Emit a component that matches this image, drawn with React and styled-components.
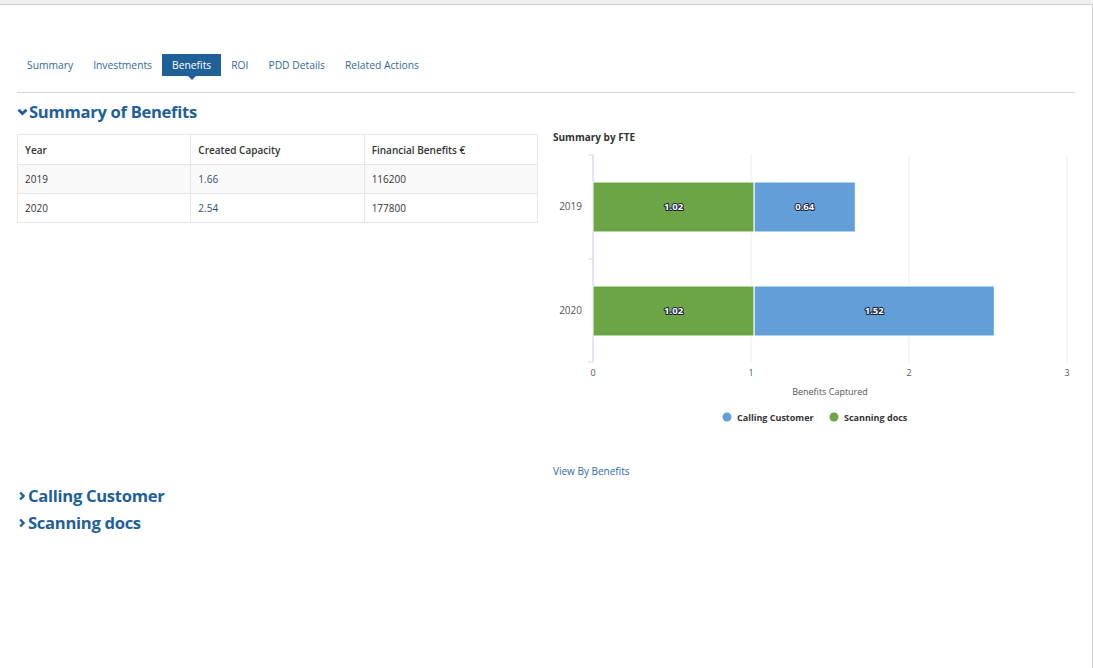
import React from 'react'
import styled, { createGlobalStyle } from 'styled-components'

const GlobalStyle = createGlobalStyle`
  html, body {
    margin: 0;
    padding: 0;
    background: #fff;
    font-family: "Open Sans", "Liberation Sans", sans-serif;
    color: #333;
  }
`

const TopStrip = styled.div`
  height: 4px;
  background: #efefef;
  border-bottom: 1px solid #cfcfcf;
`

const Panel = styled.div`
  width: 1093px;
  height: 663px;
  box-sizing: border-box;
  border-right: 1px solid #cfcfcf;
  padding: 49px 17px 0 17px;
`

const Tabs = styled.ul`
  display: flex;
  list-style: none;
  margin: 0;
  padding: 0 0 16px 0;
  border-bottom: 1px solid #d4d4d4;
`

const Tab = styled.li`
  position: relative;
  height: 22px;
  line-height: 23px;
  padding: 0 10px;
  font-size: 10.3px;
  color: ${p => (p.active ? '#fff' : '#2f6aa0')};
  background: ${p => (p.active ? '#1f6099' : 'transparent')};
  cursor: pointer;
  &::after {
    content: '';
    display: ${p => (p.active ? 'block' : 'none')};
    position: absolute;
    left: 50%;
    bottom: -4px;
    margin-left: -4px;
    border-left: 4px solid transparent;
    border-right: 4px solid transparent;
    border-top: 4px solid #1f6099;
  }
`

const SectionTitle = styled.h2`
  display: flex;
  align-items: center;
  margin: 0;
  height: 27px;
  font-size: 16.6px;
  font-weight: 700;
  color: #1f5f99;
  letter-spacing: -0.3px;
  svg {
    flex: none;
    margin-right: ${p => (p.open ? '1px' : '3px')};
    margin-left: ${p => (p.open ? '0' : '2px')};
  }
`

const Chevron = ({ open }) =>
  open ? (
    <svg width="11" height="8" viewBox="0 0 11 8">
      <path d="M1.5 1.8 L5.5 5.6 L9.5 1.8" fill="none" stroke="#1f5f99" strokeWidth="2.8" />
    </svg>
  ) : (
    <svg width="6" height="10" viewBox="0 0 6 10">
      <path d="M1.2 1.5 L4.5 5 L1.2 8.5" fill="none" stroke="#1f5f99" strokeWidth="2.4" />
    </svg>
  )

const Columns = styled.div`
  display: grid;
  grid-template-columns: 521px 1fr;
  column-gap: 15px;
  margin-top: 9px;
`

const Table = styled.table`
  width: 521px;
  border-collapse: collapse;
  table-layout: fixed;
  font-size: 10px;
  align-self: start;
`

const Th = styled.th`
  text-align: left;
  font-weight: 600;
  color: #333;
  height: 29px;
  padding: 0 7px;
  border: 1px solid #e6e6e6;
`

const Row = styled.tr`
  background: ${p => (p.striped ? '#f9f9f9' : '#fff')};
`

const Td = styled.td`
  height: 28px;
  padding: 0 7px;
  border: 1px solid #e6e6e6;
  color: ${p => (p.accent ? '#2b4d73' : '#333')};
`

const ChartBox = styled.div`
  display: flex;
  flex-direction: column;
  margin-top: -2px;
  svg {
    margin-top: 3px;
  }
`

const ChartTitle = styled.div`
  font-size: 10px;
  font-weight: 700;
  color: #333;
  height: 10px;
  line-height: 10px;
`

const ViewLink = styled.a`
  font-size: 10px;
  color: #2f6aa0;
  margin-top: 27px;
  text-decoration: none;
`

const Collapsed = styled.div`
  margin-top: 4px;
`

const GREEN = '#6ca546'
const BLUE = '#629fd6'
const X0 = 40
const UNIT = 158

const rows = [
  { year: '2019', y: 37, scan: 1.02, call: 0.64 },
  { year: '2020', y: 141, scan: 1.02, call: 1.52 },
]

const DataLabel = ({ x, y, children }) => (
  <text
    x={x}
    y={y}
    textAnchor="middle"
    fontSize="9.5"
    fontWeight="700"
    fill="#fff"
    stroke="#1b1b3a"
    strokeWidth="2"
    strokeLinejoin="round"
    style={{ paintOrder: 'stroke' }}
  >
    {children}
  </text>
)

const FteChart = () => (
  <svg width="522" height="292" viewBox="0 0 522 292" fontFamily='"Open Sans", "Liberation Sans", sans-serif'>
    {[0, 1, 2, 3].map(i => (
      <line key={i} x1={X0 + i * UNIT} x2={X0 + i * UNIT} y1="10" y2="217" stroke="#ececf2" strokeWidth="1" />
    ))}
    <line x1={X0} x2={X0} y1="10" y2="217" stroke="#ccd6eb" />
    {[10, 114, 217].map(t => (
      <line key={t} x1="35" x2={X0} y1={t} y2={t} stroke="#ccd6eb" />
    ))}
    {rows.map(r => {
      const gw = r.scan * UNIT
      const bw = r.call * UNIT
      return (
        <g key={r.year}>
          <text x="29" y={r.y + 28} textAnchor="end" fontSize="10" fill="#555">{r.year}</text>
          <rect x={X0} y={r.y} width={gw} height="50" fill={GREEN} stroke="#fff" strokeWidth="1" />
          <rect x={X0 + gw} y={r.y} width={bw} height="50" fill={BLUE} stroke="#fff" strokeWidth="1" />
          <DataLabel x={X0 + gw / 2} y={r.y + 28}>{r.scan.toFixed(2)}</DataLabel>
          <DataLabel x={X0 + gw + bw / 2} y={r.y + 28}>{r.call.toFixed(2)}</DataLabel>
        </g>
      )
    })}
    {[0, 1, 2, 3].map(i => (
      <text key={i} x={X0 + i * UNIT} y="231" textAnchor="middle" fontSize="9" fill="#555">{i}</text>
    ))}
    <text x="277" y="250" textAnchor="middle" fontSize="9" fill="#555">Benefits Captured</text>
    <circle cx="174" cy="272" r="4.5" fill={BLUE} />
    <text x="184" y="275.5" fontSize="9" fontWeight="700" fill="#333">Calling Customer</text>
    <circle cx="281" cy="272" r="4.5" fill={GREEN} />
    <text x="291" y="275.5" fontSize="9" fontWeight="700" fill="#333">Scanning docs</text>
  </svg>
)

const tabs = ['Summary', 'Investments', 'Benefits', 'ROI', 'PDD Details', 'Related Actions']

const App = () => (
  <>
    <GlobalStyle />
    <TopStrip />
    <Panel>
      <Tabs>
        {tabs.map(t => (
          <Tab key={t} active={t === 'Benefits'}>{t}</Tab>
        ))}
      </Tabs>
      <SectionTitle open style={{ marginTop: '5px' }}>
        <Chevron open />
        Summary of Benefits
      </SectionTitle>
      <Columns>
        <Table>
          <thead>
            <tr>
              <Th>Year</Th>
              <Th>Created Capacity</Th>
              <Th>Financial Benefits €</Th>
            </tr>
          </thead>
          <tbody>
            <Row striped>
              <Td>2019</Td>
              <Td accent>1.66</Td>
              <Td>116200</Td>
            </Row>
            <Row>
              <Td>2020</Td>
              <Td accent>2.54</Td>
              <Td>177800</Td>
            </Row>
          </tbody>
        </Table>
        <ChartBox>
          <ChartTitle>Summary by FTE</ChartTitle>
          <FteChart />
          <ViewLink href="#">View By Benefits</ViewLink>
        </ChartBox>
      </Columns>
      <Collapsed>
        <SectionTitle>
          <Chevron />
          Calling Customer
        </SectionTitle>
        <SectionTitle>
          <Chevron />
          Scanning docs
        </SectionTitle>
      </Collapsed>
    </Panel>
  </>
)

export default App
